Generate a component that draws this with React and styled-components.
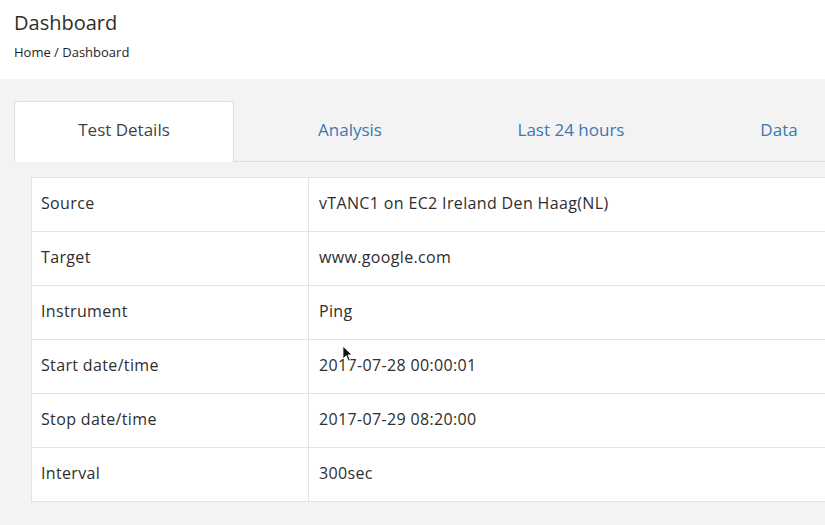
import React from "react";
import styled, { createGlobalStyle } from "styled-components";

const GlobalStyle = createGlobalStyle`
  html, body {
    margin: 0;
    padding: 0;
    background: #f3f3f3;
    overflow: hidden;
  }
  body {
    font-family: "Open Sans", "Liberation Sans", sans-serif;
    color: #333;
  }
`;

const tabs = [
  { label: "Test Details", width: 220, active: true },
  { label: "Analysis", width: 232 },
  { label: "Last 24 hours", width: 210 },
  { label: "Data", width: 206 },
];

const rows = [
  ["Source", "vTANC1 on EC2 Ireland Den Haag(NL)"],
  ["Target", "www.google.com"],
  ["Instrument", "Ping"],
  ["Start date/time", "2017-07-28 00:00:01", true],
  ["Stop date/time", "2017-07-29 08:20:00"],
  ["Interval", "300sec"],
];

export default function App() {
  return (
    <Page>
      <GlobalStyle />
      <Header>
        <h1 className="header__title">Dashboard</h1>
        <div className="header__crumbs">Home / Dashboard</div>
      </Header>
      <Content>
        <TabBar>
          {tabs.map((t) => (
            <Tab key={t.label} $active={t.active} $width={t.width}>
              {t.label}
            </Tab>
          ))}
        </TabBar>
        <Panel>
          <Table>
            <tbody>
              {rows.map(([key, value, cursor]) => (
                <tr key={key}>
                  <td className="key">{key}</td>
                  <td>
                    <Value>
                      {value}
                      {cursor && (
                        <Cursor viewBox="0 0 12 18" width="11" height="17">
                          <path
                            d="M1 1 L1 15 L4.5 11.5 L7 17 L9 16 L6.6 10.6 L11 10.6 Z"
                            fill="#111"
                            stroke="#fff"
                            strokeWidth="1"
                          />
                        </Cursor>
                      )}
                    </Value>
                  </td>
                </tr>
              ))}
            </tbody>
          </Table>
        </Panel>
      </Content>
    </Page>
  );
}

const Page = styled.div`
  width: 825px;
  height: 525px;
  display: flex;
  flex-direction: column;
`;

const Header = styled.header`
  background: #fff;
  height: 79px;
  padding: 8px 14px 0;
  box-sizing: border-box;

  .header__title {
    margin: 0;
    font-size: 20px;
    font-weight: 400;
    line-height: 30px;
    color: #2e2e2e;
  }

  .header__crumbs {
    margin-top: 6px;
    font-size: 13px;
    line-height: 16px;
    color: #1e1e1e;
  }
`;

const Content = styled.main`
  flex: 1;
  padding: 22px 0 0 14px;
  background: #f3f3f3;
`;

const TabBar = styled.nav`
  display: flex;
  height: 60px;
  border-bottom: 1px solid #dedede;
  width: 1000px;
`;

const Tab = styled.div`
  flex-shrink: 0;
  width: ${(p) => p.$width}px;
  display: flex;
  align-items: center;
  justify-content: center;
  padding-bottom: 5px;
  box-sizing: border-box;
  font-size: 17px;
  color: ${(p) => (p.$active ? "#444" : "#3c78b0")};
  background: ${(p) => (p.$active ? "#fff" : "transparent")};
  border: 1px solid ${(p) => (p.$active ? "#dedede" : "transparent")};
  border-bottom: none;
  border-radius: 4px 4px 0 0;
  margin-bottom: ${(p) => (p.$active ? "-1px" : "0")};
  height: ${(p) => (p.$active ? "61px" : "60px")};
`;

const Panel = styled.section`
  padding: 15px 0 0 17px;
`;

const Table = styled.table`
  width: 1000px;
  border-collapse: collapse;
  background: #fff;
  font-size: 16px;
  letter-spacing: 0.35px;

  td {
    height: 50px;
    padding: 0 10px 3px;
    border: 1px solid #e3e3e3;
    color: #2e2e2e;
  }

  td.key {
    width: 257px;
    padding-left: 9px;
  }
`;

const Value = styled.span`
  position: relative;
`;

const Cursor = styled.svg`
  position: absolute;
  left: 23px;
  top: -9px;
`;
